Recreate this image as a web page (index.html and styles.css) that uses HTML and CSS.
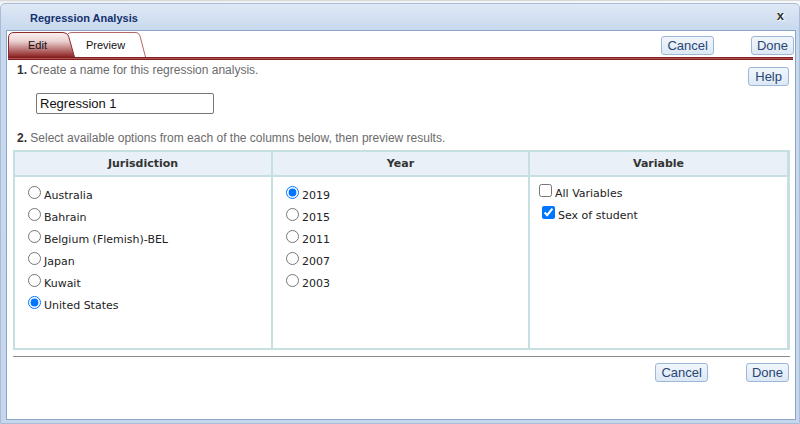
FILE: index.html
```html
<!DOCTYPE html>
<html>
<head>
<meta charset="utf-8">
<link rel="stylesheet" href="styles.css">
</head>
<body>
<div class="backdrop"></div>
<div class="dialog">
  <div class="titlebar">
    <span class="title">Regression Analysis</span>
    <span class="close">x</span>
  </div>
  <div class="panel">
    <div class="tabbar">
      <div class="tabs">
        <div class="tab tab-active">
          <svg class="tab-shape" width="67" height="25" viewBox="0 0 67 25">
            <defs>
              <linearGradient id="g-edit" x1="0" y1="0" x2="0" y2="1">
                <stop offset="0" stop-color="#fbf1f1"/>
                <stop offset="0.35" stop-color="#ecd2d2"/>
                <stop offset="1" stop-color="#8e2222"/>
              </linearGradient>
            </defs>
            <path d="M0.5 25 L0.5 6 Q0.5 0.5 6 0.5 L55 0.5 Q59 0.5 60.5 4 L66.5 25 Z" fill="url(#g-edit)" stroke="#8b2c2c" stroke-width="1"/>
          </svg>
          <span class="tab-label">Edit</span>
        </div>
        <div class="tab tab-inactive">
          <svg class="tab-shape" width="80" height="25" viewBox="0 0 80 25">
            <path d="M0.5 25 L0.5 6 Q0.5 0.5 6 0.5 L70 0.5 Q73 0.5 74 4 L79.5 25" fill="#ffffff" stroke="#b66868" stroke-width="1"/>
          </svg>
          <span class="tab-label">Preview</span>
        </div>
      </div>
      <div class="actions top-actions">
        <button class="btn">Cancel</button>
        <button class="btn">Done</button>
      </div>
    </div>
    <div class="tabline"></div>
    <div class="content">
      <div class="step-row">
        <p class="step"><b>1.</b> Create a name for this regression analysis.</p>
        <button class="btn help">Help</button>
      </div>
      <input class="name" type="text" value="Regression 1">
      <p class="step step2"><b>2.</b> Select available options from each of the columns below, then preview results.</p>
      <div class="grid">
        <div class="head">Jurisdiction</div>
        <div class="head">Year</div>
        <div class="head">Variable</div>
        <div class="cell">
          <label class="opt"><input type="radio" name="j">Australia</label>
          <label class="opt"><input type="radio" name="j">Bahrain</label>
          <label class="opt"><input type="radio" name="j">Belgium (Flemish)-BEL</label>
          <label class="opt"><input type="radio" name="j">Japan</label>
          <label class="opt"><input type="radio" name="j">Kuwait</label>
          <label class="opt"><input type="radio" name="j" checked>United States</label>
        </div>
        <div class="cell">
          <label class="opt"><input type="radio" name="y" checked>2019</label>
          <label class="opt"><input type="radio" name="y">2015</label>
          <label class="opt"><input type="radio" name="y">2011</label>
          <label class="opt"><input type="radio" name="y">2007</label>
          <label class="opt"><input type="radio" name="y">2003</label>
        </div>
        <div class="cell cell-var">
          <label class="opt"><input type="checkbox">All Variables</label>
          <label class="opt opt-sub"><input type="checkbox" checked>Sex of student</label>
        </div>
      </div>
      <div class="sep"></div>
      <div class="actions bottom-actions">
        <button class="btn">Cancel</button>
        <button class="btn">Done</button>
      </div>
    </div>
  </div>
</div>
</body>
</html>
```
FILE: styles.css
```css
* { box-sizing: border-box; }
html, body { margin: 0; padding: 0; }
body {
  width: 800px;
  height: 424px;
  overflow: hidden;
  background: #f6f6f6;
  font-family: "Liberation Sans", Arial, sans-serif;
  position: relative;
}
.backdrop {
  height: 3px;
  background: linear-gradient(90deg, #efefef, #f8f8f8);
  border-top: 1px solid #d8d8d8;
}
.dialog {
  width: 800px;
  height: 421px;
  border: 1px solid #a9bcd8;
  border-radius: 5px 5px 0 0;
  background: linear-gradient(#dfe8f5, #c8d9ee 26px, #c6d7ec);
  padding: 0 3px 3px 5px;
  display: flex;
  flex-direction: column;
}
.titlebar {
  height: 26px;
  flex: none;
  display: flex;
  align-items: center;
  justify-content: space-between;
  padding: 0 12px 0 24px;
}
.title {
  font-weight: bold;
  font-size: 11px;
  color: #15316e;
  padding-top: 1px;
}
.close {
  font-weight: bold;
  font-size: 13px;
  color: #333;
  text-shadow: 0 0 1px #fff, 1px 1px 0 #fff;
  line-height: 1;
  margin-bottom: 4px;
}
.panel {
  flex: 1;
  background: #fff;
  border: 1px solid #8ba5cb;
  display: flex;
  flex-direction: column;
}
.tabbar {
  height: 26px;
  flex: none;
  display: flex;
  justify-content: space-between;
}
.tabs {
  display: flex;
  align-items: flex-end;
  padding: 1px 0 0 1px;
}
.tab {
  position: relative;
  height: 25px;
}
.tab-active { width: 67px; z-index: 2; }
.tab-inactive { width: 80px; margin-left: -9px; z-index: 1; }
.tab-shape { position: absolute; left: 0; top: 0; }
.tab-label {
  position: relative;
  display: block;
  padding: 1px 0 0 20px;
  font-size: 11px;
  line-height: 24px;
  color: #111;
}
.tabline {
  flex: none;
  height: 3px;
  margin: 0 2px 0 1px;
  border-top: 1px solid #7e1d1d;
  border-bottom: 1px solid #7e1d1d;
  background: #b65454;
}
.actions { display: flex; }
.top-actions { gap: 37px; padding-top: 5px; margin-right: 1px; }
.bottom-actions { gap: 38px; justify-content: flex-end; margin-top: 6px; margin-right: 1px; }
.btn {
  height: 19px;
  padding: 0 5px;
  border: 1px solid #9db7d7;
  border-radius: 3px;
  background: linear-gradient(#f1f6fc, #dde8f5);
  font-family: "Liberation Sans", Arial, sans-serif;
  font-size: 13px;
  line-height: 17px;
  color: #284673;
}
.help { padding: 0 6px; margin-top: 4px; margin-right: 1px; }
.content {
  padding: 0 5px 0 6px;
}
.step-row {
  display: flex;
  justify-content: space-between;
  align-items: flex-start;
  margin-top: 3px;
}
.step {
  margin: 0;
  padding-left: 4px;
  font-size: 12px;
  line-height: 14px;
  color: #6b6b6b;
}
.step b { color: #333; }
.step2 { margin-top: 17px; }
.name {
  display: block;
  margin: 7px 0 0 23px;
  width: 178px;
  height: 21px;
  padding: 0 3px;
  border: 1px solid #767676;
  border-radius: 2px;
  font-family: "Liberation Sans", Arial, sans-serif;
  font-size: 13px;
  color: #111;
}
.grid {
  margin-top: 5px;
  display: grid;
  grid-template-columns: 256px 255px 257px;
  grid-template-rows: 23px 171px;
  gap: 2px;
  padding: 2px;
  background: #c6dfe1;
}
.head {
  background: #e9f0f7;
  text-align: center;
  font-family: "DejaVu Sans", Verdana, sans-serif;
  font-weight: bold;
  font-size: 11px;
  line-height: 24px;
  color: #333;
}
.cell {
  background: #fff;
  padding: 8px 0 0 8px;
  font-family: "DejaVu Sans", Verdana, sans-serif;
  font-size: 11px;
  line-height: 22px;
  color: #222;
}
.cell-var { padding: 6px 0 0 5px; }
.opt { display: block; white-space: nowrap; }
.opt input[type=radio] { margin: 0 3px 0 5px; vertical-align: baseline; }
.opt input[type=checkbox] { margin: 0 3px 0 4px; vertical-align: baseline; }
.opt-sub { padding-left: 3px; }
.sep {
  margin-top: 6px;
  height: 1px;
  background: #8a8a8a;
}
```
